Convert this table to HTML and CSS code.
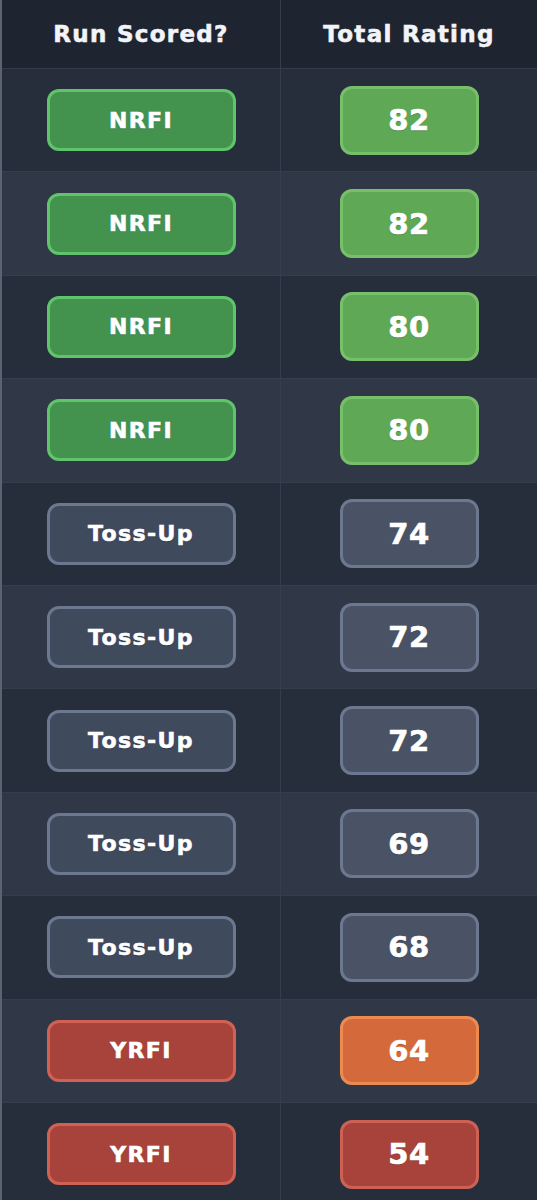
FILE: index.html
```html
<!DOCTYPE html>
<html>
<head>
<meta charset="utf-8">
<link rel="stylesheet" href="styles.css">
</head>
<body>
<table class="grid">
  <thead>
    <tr><th class="c1">Run Scored?</th><th class="c2">Total Rating</th></tr>
  </thead>
  <tbody>
    <tr><td class="c1"><span class="pill nrfi">NRFI</span></td><td class="c2"><span class="score s-green">82</span></td></tr>
    <tr><td class="c1"><span class="pill nrfi">NRFI</span></td><td class="c2"><span class="score s-green">82</span></td></tr>
    <tr><td class="c1"><span class="pill nrfi">NRFI</span></td><td class="c2"><span class="score s-green">80</span></td></tr>
    <tr><td class="c1"><span class="pill nrfi">NRFI</span></td><td class="c2"><span class="score s-green">80</span></td></tr>
    <tr><td class="c1"><span class="pill toss">Toss-Up</span></td><td class="c2"><span class="score s-gray">74</span></td></tr>
    <tr><td class="c1"><span class="pill toss">Toss-Up</span></td><td class="c2"><span class="score s-gray">72</span></td></tr>
    <tr><td class="c1"><span class="pill toss">Toss-Up</span></td><td class="c2"><span class="score s-gray">72</span></td></tr>
    <tr><td class="c1"><span class="pill toss">Toss-Up</span></td><td class="c2"><span class="score s-gray">69</span></td></tr>
    <tr><td class="c1"><span class="pill toss">Toss-Up</span></td><td class="c2"><span class="score s-gray">68</span></td></tr>
    <tr><td class="c1"><span class="pill yrfi">YRFI</span></td><td class="c2"><span class="score s-orange">64</span></td></tr>
    <tr><td class="c1"><span class="pill yrfi">YRFI</span></td><td class="c2"><span class="score s-red">54</span></td></tr>
  </tbody>
</table>
</body>
</html>
```

FILE: styles.css
```css
html, body {
  margin: 0;
  padding: 0;
  background: #252d3a;
}
body {
  font-family: "DejaVu Sans", "Liberation Sans", sans-serif;
  color: #ffffff;
}
.grid {
  width: 537px;
  border-collapse: collapse;
  table-layout: fixed;
  border-left: 2px solid #5b6372;
}
.grid th {
  background: #1e2430;
  height: 68px;
  padding: 0;
  font-size: 23px;
  font-weight: bold;
  letter-spacing: 1.3px;
  color: #f2f4f8;
  -webkit-text-stroke: 0.6px #f2f4f8;
  text-align: center;
  vertical-align: middle;
  border-bottom: 1px solid #343c4a;
}
.grid th.c1, .grid td.c1 {
  width: 278px;
  border-right: 1px solid #363e4d;
}
.grid td {
  height: 102.4px;
  padding: 0;
  text-align: center;
  vertical-align: middle;
  border-bottom: 1px solid #363e4d;
}
.grid tbody tr:nth-child(odd) td { background: #262e3b; }
.grid tbody tr:nth-child(even) td { background: #303847; }
.pill {
  display: inline-flex;
  align-items: center;
  justify-content: center;
  box-sizing: border-box;
  width: 189px;
  height: 62px;
  border: 3px solid;
  border-radius: 12px;
  font-size: 22px;
  font-weight: bold;
  letter-spacing: 1.4px;
  -webkit-text-stroke: 0.6px #ffffff;
  text-shadow: 0 1px 1px rgba(0,0,0,0.25);
}
.score {
  display: inline-flex;
  align-items: center;
  justify-content: center;
  box-sizing: border-box;
  width: 139px;
  height: 69px;
  border: 3px solid;
  border-radius: 12px;
  font-size: 29px;
  font-weight: bold;
  letter-spacing: 0.5px;
  -webkit-text-stroke: 0.7px #ffffff;
  text-shadow: 0 1px 1px rgba(0,0,0,0.25);
}
.nrfi { background: #43934f; border-color: #5fc46b; }
.toss { background: #3f4a5c; border-color: #6c7890; }
.yrfi { background: #a8433b; border-color: #cf6255; }
.s-green { background: #5fa855; border-color: #76c06a; }
.s-gray { background: #4a5366; border-color: #6c7890; }
.s-orange { background: #d4693c; border-color: #ec8a50; }
.s-red { background: #a8433b; border-color: #cd6154; }
```
